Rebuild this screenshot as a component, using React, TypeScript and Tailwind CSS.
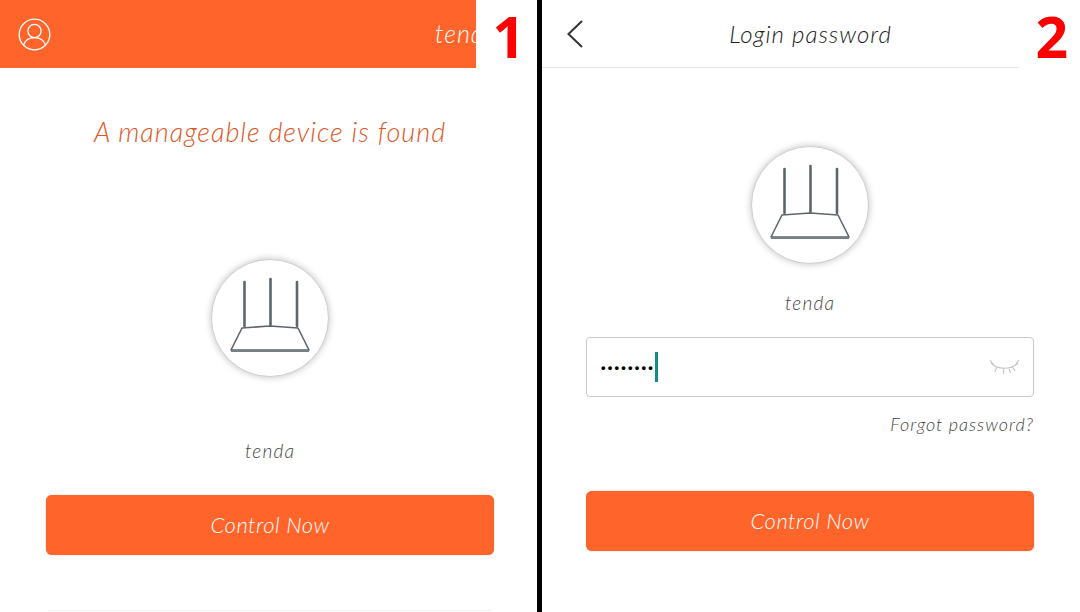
const RouterBadge = () => (
    <div className="mr-px h-[118px] w-[118px] rounded-full border border-[#cfcfcf] bg-white shadow-[0_0_7px_rgba(0,0,0,0.25)]">
        <svg width="116" height="116" viewBox="0 0 116 116" fill="none">
            <g stroke="#5c666c" strokeWidth="2.6" strokeLinecap="round">
                <path d="M32.5 22V66" />
                <path d="M58.5 19V65" />
                <path d="M85 22V66" />
            </g>
            <path
                d="M30 68L58 66L86 68L97 90H19Z"
                stroke="#5c666c"
                strokeWidth="1.6"
                strokeLinejoin="round"
                fill="#fff"
            />
            <path d="M19 91H97" stroke="#777f84" strokeWidth="2" />
        </svg>
    </div>
);

const ControlButton = () => (
    <button className="h-[60px] w-[448px] rounded-md bg-[#ff652b] pb-[2px] text-[22px] font-light tracking-[0.5px] text-white italic shadow-[0_0_1px_rgba(160,70,30,0.8)]">
        Control Now
    </button>
);

const PanelNumber = ({ value }: { value: string }) => (
    <span className="font-['Open_Sans',sans-serif] text-[57px] leading-[64px] font-bold text-[#ff0000] not-italic">
        {value}
    </span>
);

const App = () => {
    return (
        <div className="flex h-[612px] w-[1080px] overflow-hidden bg-white font-['Lato',sans-serif]">
            <section className="flex h-full w-[537px] shrink-0 flex-col">
                <div className="flex h-[68px] w-full shrink-0">
                    <header className="flex h-full w-[476px] items-center overflow-hidden bg-[#ff652b] pl-[18px] text-white">
                        <svg
                            className="shrink-0"
                            width="33"
                            height="33"
                            viewBox="0 0 33 33"
                            fill="none"
                            stroke="#fff"
                            strokeWidth="1.3"
                        >
                            <circle cx="16.5" cy="16.5" r="15.3" />
                            <circle cx="16.5" cy="13" r="6.6" />
                            <path d="M5.5 27C7 22.5 11 19.6 16.5 19.6C22 19.6 26 22.5 27.5 27" />
                        </svg>
                        <span className="ml-[384px] text-[25px] font-light tracking-[1px] whitespace-nowrap italic">
                            tenda
                        </span>
                    </header>
                    <div className="flex flex-1 items-center justify-end pt-[4px] pr-[12px]">
                        <PanelNumber value="1" />
                    </div>
                </div>
                <div className="ml-[46px] flex w-[448px] flex-col items-center">
                    <h1 className="mt-[46px] text-[27px] leading-[36px] font-light tracking-[1px] text-[#e0561f] italic">
                        A manageable device is found
                    </h1>
                    <div className="mt-[109px]">
                        <RouterBadge />
                    </div>
                    <p className="mt-[62px] text-[19px] leading-[24px] font-light tracking-[1.2px] text-[#444] italic">
                        tenda
                    </p>
                    <div className="mt-[32px]">
                        <ControlButton />
                    </div>
                    <div className="mt-[55px] h-px w-[444px] bg-[#f2f2f2]" />
                </div>
            </section>

            <div className="h-full w-[5px] shrink-0 bg-black" />

            <section className="flex h-full flex-1 flex-col">
                <div className="flex h-[68px] w-full shrink-0">
                    <header className="flex h-full w-[477px] items-center justify-between border-b border-[#e6e6e6] pr-[127px] pl-[24px]">
                        <svg width="18" height="30" viewBox="0 0 18 30" fill="none" stroke="#333" strokeWidth="2">
                            <path d="M16 2L2.5 15L16 28" />
                        </svg>
                        <span className="text-[24px] font-light tracking-[1px] text-[#222] italic">
                            Login password
                        </span>
                    </header>
                    <div className="flex flex-1 items-center justify-end pt-[4px] pr-[12px]">
                        <PanelNumber value="2" />
                    </div>
                </div>
                <div className="ml-[44px] flex w-[448px] flex-col items-center">
                    <div className="mt-[78px]">
                        <RouterBadge />
                    </div>
                    <p className="mt-[27px] text-[19px] leading-[24px] font-light tracking-[1.2px] text-[#444] italic">
                        tenda
                    </p>
                    <div className="mt-[22px] flex h-[60px] w-[448px] items-center justify-between rounded-[4px] border border-[#c9c9c9] pr-[13px] pl-[14px]">
                        <div className="flex items-center">
                            <span className="font-['Liberation_Sans',sans-serif] text-[13px] leading-none font-bold tracking-[2.2px] text-black">
                                ••••••••
                            </span>
                            <span className="h-[30px] w-[3px] bg-[#12907f]" />
                        </div>
                        <svg width="31" height="16" viewBox="0 0 32 16" fill="none" stroke="#c4c4c4" strokeWidth="1.2">
                            <path d="M2 4C9 11 22 11 30 4" />
                            <path d="M1 1L5 6M6 13L8 8M15 15L15 10M22 14L21 10M27 12L24 8M31 1L27 6" />
                        </svg>
                    </div>
                    <div className="mt-[15px] w-[448px] text-right text-[18px] leading-[24px] font-light tracking-[1px] text-[#444] italic">
                        Forgot password?
                    </div>
                    <div className="mt-[55px]">
                        <ControlButton />
                    </div>
                </div>
            </section>
        </div>
    );
};

export default App;
